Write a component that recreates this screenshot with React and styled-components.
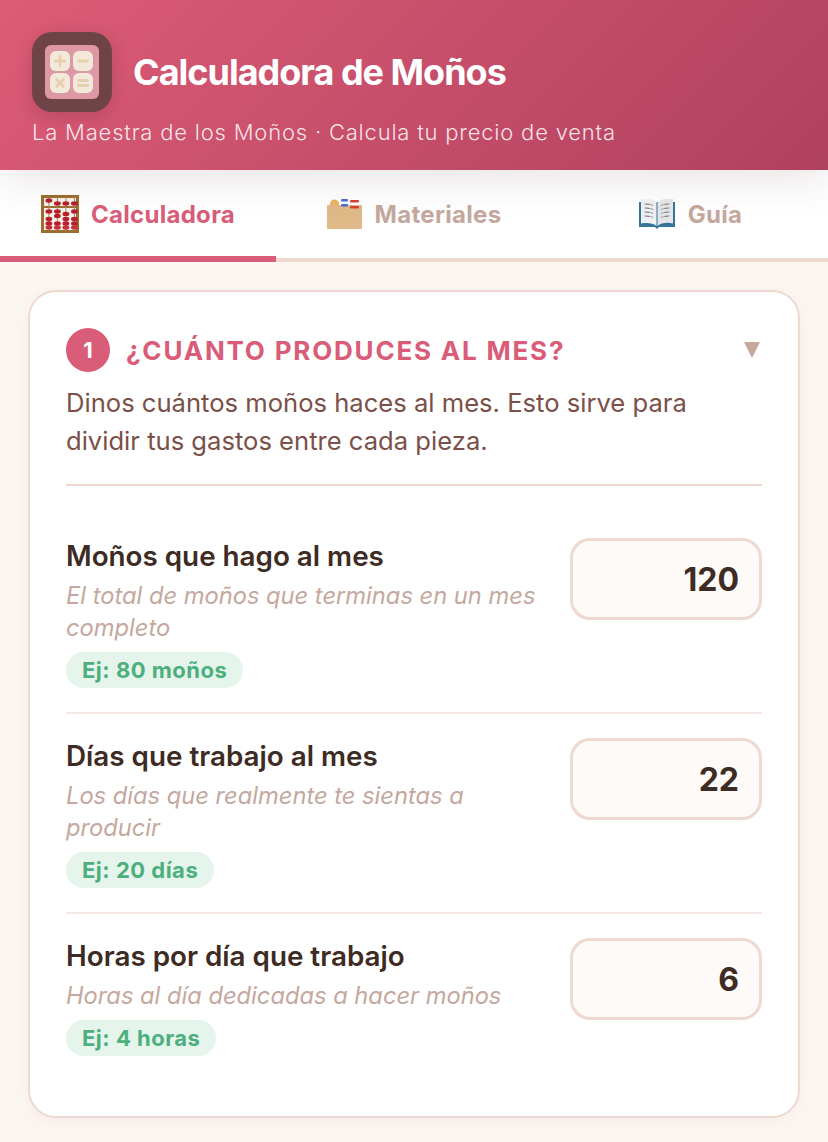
import React from "react";
import styled, { createGlobalStyle } from "styled-components";

const GlobalStyle = createGlobalStyle`
  html, body {
    margin: 0;
    padding: 0;
    background: #fcf6f3;
  }
  * {
    box-sizing: border-box;
  }
  body {
    font-family: "Inter", "Noto Sans", sans-serif;
    -webkit-font-smoothing: antialiased;
  }
`;

const Page = styled.div`
  width: 828px;
  height: 1142px;
  overflow: hidden;
  background: #fcf6f3;
`;

const Header = styled.header`
  position: relative;
  z-index: 2;
  height: 170px;
  padding: 32px 32px 0;
  background: linear-gradient(135deg, #dd5c75 0%, #b04060 100%);
  box-shadow: 0 8px 40px rgba(90, 50, 60, 0.14);
`;

const Brand = styled.div`
  display: flex;
  align-items: center;
  gap: 21px;
`;

const LogoTile = styled.div`
  width: 80px;
  height: 80px;
  border-radius: 20px;
  background: #6e4449;
  display: flex;
  align-items: center;
  justify-content: center;
  box-shadow: 0 4px 16px rgba(90, 40, 50, 0.25);
`;

const Title = styled.h1`
  margin: 0;
  font-size: 36px;
  font-weight: 700;
  letter-spacing: -1px;
  color: #fff;
`;

const Subtitle = styled.p`
  margin: 8px 0 0;
  font-size: 22px;
  line-height: 24px;
  font-weight: 300;
  letter-spacing: 0.8px;
  color: rgba(255, 255, 255, 0.85);
`;

const Tabs = styled.nav`
  display: grid;
  grid-template-columns: repeat(3, 1fr);
  height: 92px;
  background: #fff;
  border-bottom: 4px solid #edd9d0;
`;

const Tab = styled.div`
  display: flex;
  align-items: center;
  justify-content: center;
  gap: 12px;
  height: 92px;
  padding-top: 2px;
  font-size: 24px;
  font-weight: 700;
  letter-spacing: 0.3px;
  color: ${(p) => (p.$active ? "#d95c78" : "#c4a89e")};
  border-bottom: 6px solid ${(p) => (p.$active ? "#d95c78" : "transparent")};
`;

const Main = styled.main`
  padding: 28px 28px 0;
`;

const Card = styled.section`
  background: #fff;
  border: 2px solid #edd9d0;
  border-radius: 28px;
  padding: 36px;
  box-shadow: 0 4px 20px rgba(180, 120, 110, 0.08);
`;

const CardHead = styled.div`
  display: flex;
  align-items: center;
  gap: 16px;
`;

const StepNumber = styled.span`
  flex: none;
  width: 44px;
  height: 44px;
  border-radius: 50%;
  background: #d95c78;
  color: #fff;
  font-size: 22px;
  font-weight: 700;
  display: flex;
  align-items: center;
  justify-content: center;
`;

const CardTitle = styled.h2`
  flex: 1;
  margin: 0;
  font-size: 26px;
  font-weight: 700;
  letter-spacing: 1.8px;
  color: #d95c78;
`;

const Caret = styled.span`
  width: 0;
  height: 0;
  margin-right: 2px;
  border-left: 8.5px solid transparent;
  border-right: 8.5px solid transparent;
  border-top: 16px solid #c4a89e;
`;

const Description = styled.p`
  margin: 12px 0 0;
  padding-bottom: 24px;
  font-size: 25.6px;
  line-height: 38px;
  color: #7a5048;
  border-bottom: 2px solid #edd9d0;
`;

const FieldRow = styled.div`
  display: flex;
  align-items: flex-start;
  justify-content: space-between;
  gap: 24px;
  padding: ${(p) => (p.$first ? "52px" : "24px")} 0 24px;
  border-bottom: ${(p) => (p.$last ? "none" : "2px solid #f3e8e3")};
`;

const FieldInfo = styled.div`
  flex: 1;
  min-width: 0;
`;

const FieldLabel = styled.div`
  font-size: 27.8px;
  line-height: 36px;
  font-weight: 600;
  color: #3d2b24;
`;

const FieldHint = styled.div`
  margin-top: 6px;
  font-size: 23.7px;
  line-height: 32px;
  font-style: italic;
  color: #c4a89e;
`;

const Example = styled.span`
  display: inline-block;
  margin-top: 8px;
  padding: 0 16px;
  height: 36px;
  line-height: 36px;
  border-radius: 18px;
  background: #e6f5ec;
  color: #4caf7d;
  font-size: 22px;
  font-weight: 700;
  letter-spacing: 0.5px;
`;

const NumberInput = styled.input`
  flex: none;
  width: 192px;
  height: 82px;
  padding: 0 20px;
  border: 3px solid #edd9d0;
  border-radius: 20px;
  background: #fefaf7;
  font-family: inherit;
  font-size: 32px;
  font-weight: 700;
  text-align: right;
  color: #3d2b24;
  outline: none;
`;

const LogoIcon = () => (
  <svg width="54" height="54" viewBox="0 0 54 54">
    <rect width="54" height="54" rx="6" fill="#de97a4" />
    <g fill="#d3a39a">
      <rect x="5" y="7" width="20" height="20" rx="6" />
      <rect x="28" y="7" width="20" height="20" rx="6" />
      <rect x="5" y="29" width="20" height="20" rx="6" />
      <rect x="28" y="29" width="20" height="20" rx="6" />
    </g>
    <g fill="#f3e9da">
      <rect x="5" y="6" width="20" height="20" rx="6" />
      <rect x="28" y="6" width="20" height="20" rx="6" />
      <rect x="5" y="28" width="20" height="20" rx="6" />
      <rect x="28" y="28" width="20" height="20" rx="6" />
    </g>
    <g stroke="#e6cfae" strokeWidth="2.8" strokeLinecap="round">
      <path d="M15 11.5v9M10.5 16h9" />
      <path d="M33.5 16h9" />
      <path d="M11.5 34.5l7 7M18.5 34.5l-7 7" />
      <path d="M33.5 35.5h9M33.5 40.5h9" />
    </g>
  </svg>
);

const AbacusIcon = () => {
  const columns = [6, 14.5, 23, 31.5];
  return (
    <svg width="38" height="38" viewBox="0 0 38 38">
      <rect x="1.5" y="1.5" width="35" height="35" fill="#f7f2ea" stroke="#9c6f2f" strokeWidth="3" />
      <rect x="2" y="11" width="34" height="2" fill="#9c6f2f" />
      {columns.map((x, i) => (
        <g key={x}>
          <rect x={x + 1.4} y="2" width="1" height="34" fill="#a58a66" />
          <ellipse cx={x + 1.9} cy={i === 0 ? 5.5 : 8.5} rx="3.4" ry="2.2" fill="#b81f2b" />
          <ellipse cx={x + 1.9} cy={i === 2 ? 19 : 16.5} rx="3.4" ry="2.2" fill="#b81f2b" />
          <ellipse cx={x + 1.9} cy={i === 1 ? 21 : 24} rx="3.4" ry="2.2" fill="#b81f2b" />
          <ellipse cx={x + 1.9} cy="28.5" rx="3.4" ry="2.2" fill="#b81f2b" />
          <ellipse cx={x + 1.9} cy="32.5" rx="3.4" ry="2.2" fill="#c9303a" />
        </g>
      ))}
    </svg>
  );
};

const BoxIcon = () => (
  <svg width="36" height="36" viewBox="0 0 36 36">
    <path d="M3 8a4 4 0 0 1 9 0v3H3z" fill="#eeb45e" />
    <rect x="14" y="3" width="7" height="2.4" rx="1" fill="#4d6bd0" />
    <rect x="23" y="4" width="9" height="2.4" rx="1" fill="#d9403a" />
    <rect x="0" y="9" width="35" height="24" rx="1" fill="#e0b988" />
    <rect x="14" y="8" width="7" height="2.4" rx="1" fill="#4d6bd0" />
    <rect x="23" y="10" width="9" height="2.4" rx="1" fill="#d9403a" />
  </svg>
);

const BookIcon = () => (
  <svg width="38" height="34" viewBox="0 0 38 34">
    <path d="M1 5h36v25H21l-2 2-2-2H1z" fill="#37749a" />
    <path d="M3 2c6-1 12 0 15.5 3v24C15 26 9 25.5 3 26.5z" fill="#eef0f1" />
    <path d="M35 2c-6-1-12 0-15.5 3v24c3.5-3 9.5-4 15.5-2.5z" fill="#e4e7e9" />
    <g stroke="#c5cbcf" strokeWidth="1">
      <path d="M6 7c3-.4 6 0 9.5 1.400M6 11c3-.4 6 0 9.5 1.400M6 15c3-.4 6 0 9.5 1.400M6 19c3-.4 6 0 9.5 1.400" />
      <path d="M32 7c-3-.4-6 0-9.5 1.400M32 11c-3-.4-6 0-9.5 1.400M32 15c-3-.4-6 0-9.5 1.400M32 19c-3-.4-6 0-9.5 1.400" />
    </g>
  </svg>
);

const fields = [
  {
    label: "Moños que hago al mes",
    hint: "El total de moños que terminas en un mes completo",
    example: "Ej: 80 moños",
    value: "120",
  },
  {
    label: "Días que trabajo al mes",
    hint: "Los días que realmente te sientas a producir",
    example: "Ej: 20 días",
    value: "22",
  },
  {
    label: "Horas por día que trabajo",
    hint: "Horas al día dedicadas a hacer moños",
    example: "Ej: 4 horas",
    value: "6",
  },
];

const App = () => {
  return (
    <Page>
      <GlobalStyle />
      <Header>
        <Brand>
          <LogoTile>
            <LogoIcon />
          </LogoTile>
          <Title>Calculadora de Moños</Title>
        </Brand>
        <Subtitle>La Maestra de los Moños · Calcula tu precio de venta</Subtitle>
      </Header>
      <Tabs>
        <Tab $active>
          <AbacusIcon />
          Calculadora
        </Tab>
        <Tab>
          <BoxIcon />
          Materiales
        </Tab>
        <Tab>
          <BookIcon />
          Guía
        </Tab>
      </Tabs>
      <Main>
        <Card>
          <CardHead>
            <StepNumber>1</StepNumber>
            <CardTitle>¿CUÁNTO PRODUCES AL MES?</CardTitle>
            <Caret />
          </CardHead>
          <Description>
            Dinos cuántos moños haces al mes. Esto sirve para dividir tus gastos entre cada pieza.
          </Description>
          {fields.map((field, i) => (
            <FieldRow key={field.label} $first={i === 0} $last={i === fields.length - 1}>
              <FieldInfo>
                <FieldLabel>{field.label}</FieldLabel>
                <FieldHint>{field.hint}</FieldHint>
                <Example>{field.example}</Example>
              </FieldInfo>
              <NumberInput defaultValue={field.value} />
            </FieldRow>
          ))}
        </Card>
      </Main>
    </Page>
  );
};

export default App;
